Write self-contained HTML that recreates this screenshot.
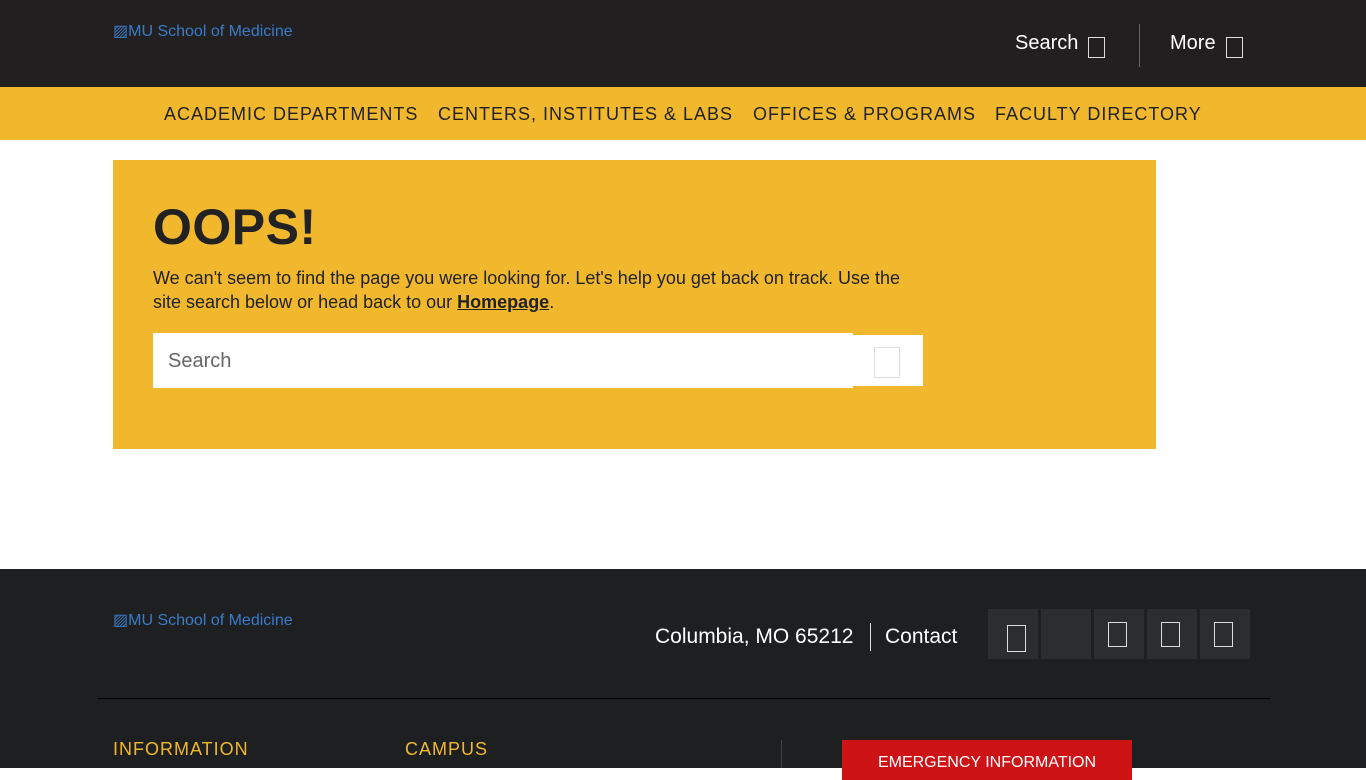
<!DOCTYPE html>
<html><head><meta charset="utf-8"><style>
*{margin:0;padding:0;box-sizing:border-box}
body{width:1366px;height:768px;overflow:hidden;font-family:"Liberation Sans",Arial,sans-serif;background:#fff;position:relative}
.abs{position:absolute}
.top{left:0;top:0;width:1366px;height:87px;background:#221f20}
.logo{color:#3a7bc8;font-size:16px}
.box{display:inline-block;border:1.5px solid #ddd;}
.nav{left:0;top:87px;width:1366px;height:53px;background:#f1b82d}
.nav span{position:absolute;top:17px;font-size:18px;letter-spacing:1px;color:#222}
.card{left:113px;top:160px;width:1043px;height:289px;background:#f1b82d}
.foot{left:0;top:569px;width:1366px;height:199px;background:#1e1f21}
.soc{position:absolute;top:609px;width:50px;height:50px;background:#2b2d30}
.soc i{position:absolute;left:14px;top:13px;width:19px;height:25px;border:1.5px solid #ddd}
</style></head><body>
<div class="abs top"></div>
<div class="abs logo" style="left:113px;top:21px">▨MU School of Medicine</div>
<div class="abs" style="left:1015px;top:32px;color:#fff;font-size:20px">Search</div>
<div class="abs box" style="left:1088px;top:37px;width:17px;height:21px"></div>
<div class="abs" style="left:1139px;top:24px;width:1px;height:43px;background:#666"></div>
<div class="abs" style="left:1170px;top:32px;color:#fff;font-size:20px">More</div>
<div class="abs box" style="left:1226px;top:37px;width:17px;height:21px"></div>
<div class="abs nav">
<span style="left:164px">ACADEMIC DEPARTMENTS</span>
<span style="left:438px">CENTERS, INSTITUTES &amp; LABS</span>
<span style="left:753px">OFFICES &amp; PROGRAMS</span>
<span style="left:995px">FACULTY DIRECTORY</span>
</div>
<div class="abs card"></div>
<div class="abs" style="left:153px;top:198px;font-size:50px;font-weight:bold;color:#222;letter-spacing:0.5px">OOPS!</div>
<div class="abs" style="left:153px;top:266px;width:770px;font-size:18px;line-height:24px;color:#222">We can't seem to find the page you were looking for. Let's help you get back on track. Use the site search below or head back to our <b><u>Homepage</u></b>.</div>
<div class="abs" style="left:153px;top:333px;width:700px;height:55px;background:#fff"></div>
<div class="abs" style="left:168px;top:350px;font-size:20px;color:#666">Search</div>
<div class="abs" style="left:853px;top:335px;width:70px;height:51px;background:#fff"></div>
<div class="abs box" style="left:874px;top:347px;width:26px;height:31px"></div>
<div class="abs foot"></div>
<div class="abs logo" style="left:113px;top:610px">▨MU School of Medicine</div>
<div class="abs" style="left:655px;top:625px;color:#fff;font-size:21px">Columbia, MO 65212</div>
<div class="abs" style="left:870px;top:623px;width:1px;height:28px;background:#ddd"></div>
<div class="abs" style="left:885px;top:625px;color:#fff;font-size:21px">Contact</div>
<div class="soc" style="left:988px"><i style="left:19px;top:16px;height:27px"></i></div>
<div class="soc" style="left:1041px"></div>
<div class="soc" style="left:1094px"><i></i></div>
<div class="soc" style="left:1147px"><i></i></div>
<div class="soc" style="left:1200px"><i></i></div>
<div class="abs" style="left:98px;top:698px;width:1172px;height:1px;background:#000"></div>
<div class="abs" style="left:113px;top:739px;color:#f1b82d;font-size:18px;letter-spacing:1px">INFORMATION</div>
<div class="abs" style="left:405px;top:739px;color:#f1b82d;font-size:18px;letter-spacing:1px">CAMPUS</div>
<div class="abs" style="left:781px;top:740px;width:1px;height:28px;background:#444"></div>
<div class="abs" style="left:842px;top:740px;width:290px;height:40px;background:#cd1316;color:#fff;font-size:16px;text-align:center;padding-top:14px">EMERGENCY INFORMATION</div>
</body></html>
